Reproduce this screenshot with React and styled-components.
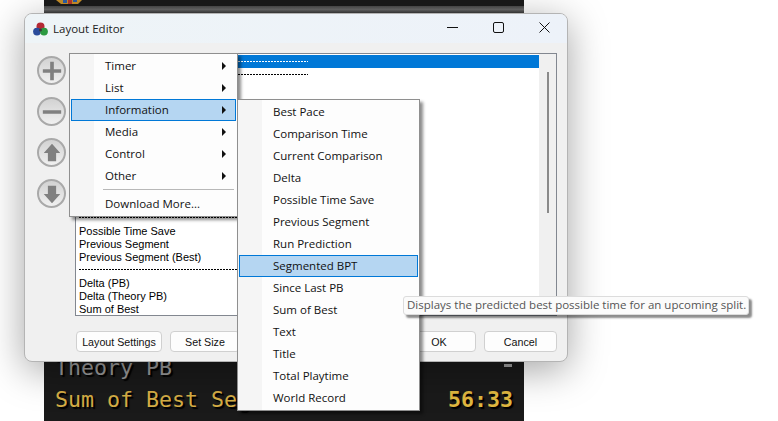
import React from 'react';
import styled, { createGlobalStyle } from 'styled-components';

const GlobalStyle = createGlobalStyle`
  html, body { margin: 0; padding: 0; background: #fff; overflow: hidden; }
  body { font-family: "Open Sans", "Noto Sans", sans-serif; }
`;

const Desktop = styled.div`
  position: relative;
  width: 778px;
  height: 421px;
  overflow: hidden;
  background: #fff;
`;

const Timer = styled.div`
  position: absolute;
  left: 44px;
  top: 0;
  width: 480px;
  height: 421px;
  box-sizing: border-box;
  padding-bottom: 6px;
  background: #1a1a1a;
  font-family: "DejaVu Sans Mono", monospace;
  display: flex;
  flex-direction: column;
  justify-content: flex-end;
`;

const TimerTopStripe = styled.div`
  position: absolute;
  left: 0;
  right: 0;
  top: 6px;
  height: 7px;
  background: linear-gradient(#4a4a4a, #6a6a6a 50%, #3a3a3a);
`;

const TimerIcon = styled.svg`
  position: absolute;
  left: 9px;
  top: 0;
`;

const TimerRow = styled.div`
  display: flex;
  justify-content: space-between;
  align-items: center;
  height: ${(p) => p.$h}px;
  padding: 0 11px;
  font-size: 21.6px;
  color: ${(p) => p.$color};
  text-shadow: 2px 2px 1px #000;
`;

const TimerValue = styled.span`
  font-weight: 700;
  color: #e0b840;
`;

const TimerDash = styled.span`
  width: 8px;
  height: 3px;
  margin: 0 1px 5px 0;
  background: #a0a0a0;
`;

const Window = styled.div`
  position: absolute;
  left: 24px;
  top: 13px;
  width: 544px;
  height: 349px;
  box-sizing: border-box;
  background: #f0f0f0;
  border: 1px solid #b4b4b4;
  border-radius: 8px;
  box-shadow: 0 8px 38px rgba(0, 0, 0, 0.36);
  display: flex;
  flex-direction: column;
  overflow: hidden;
`;

const TitleBar = styled.div`
  flex: 0 0 29px;
  display: flex;
  align-items: center;
  padding-left: 8px;
  background: linear-gradient(90deg, #eef4f7, #edf2f9);
  font-size: 11.5px;
  color: #222;
  gap: 5px;
`;

const WindowControls = styled.div`
  margin-left: auto;
  display: flex;
  height: 100%;
  padding-bottom: 2px;
  box-sizing: border-box;
`;

const ControlButton = styled.div`
  width: 46px;
  display: flex;
  align-items: center;
  justify-content: center;
`;

const Body = styled.div`
  flex: 1;
  display: flex;
  flex-direction: column;
  padding: 10px 10px 0 12px;
`;

const Editor = styled.div`
  display: flex;
  gap: 9px;
  height: 263px;
`;

const ToolColumn = styled.div`
  width: 29px;
  display: flex;
  flex-direction: column;
  gap: 12px;
  padding-top: 3px;
`;

const RoundTool = styled.div`
  width: 29px;
  height: 29px;
  border-radius: 50%;
  box-sizing: border-box;
  border: 2px solid #a9a9a9;
  background: linear-gradient(#d2d2d2, #f0f0f0);
  display: flex;
  align-items: center;
  justify-content: center;
`;

const ListBox = styled.div`
  flex: 1;
  position: relative;
  box-sizing: border-box;
  background: #fff;
  border: 1px solid #828790;
  padding: 1px 0 0 0;
  overflow: hidden;
  font-family: "Liberation Sans", Arial, sans-serif;
  font-size: 11px;
  color: #000;
`;

const ListRow = styled.div`
  height: 13px;
  line-height: 15px;
  width: 464px;
  padding-left: 3px;
  box-sizing: border-box;
  white-space: nowrap;
  overflow: hidden;
  background: ${(p) => (p.$selected ? '#0078d7' : 'transparent')};
  color: ${(p) => (p.$selected ? '#fff' : '#000')};
`;

const Dashes = styled.div`
  width: 229px;
  height: 1px;
  margin-top: 6px;
  background: repeating-linear-gradient(90deg, currentColor 0 2px, transparent 2px 3px);
`;

const ScrollTrack = styled.div`
  position: absolute;
  right: 0;
  top: 0;
  bottom: 0;
  width: 17px;
  background: #f0f0f0;
  display: flex;
  justify-content: center;
  padding-top: 18px;
  box-sizing: border-box;
`;

const ScrollThumb = styled.div`
  width: 2px;
  height: 141px;
  background: #8a8a8a;
`;

const ButtonBar = styled.div`
  display: flex;
  justify-content: space-between;
  margin-top: 15px;
  padding-left: 39px;
`;

const ButtonGroup = styled.div`
  display: flex;
  gap: 8px;
`;

const DialogButton = styled.div`
  width: ${(p) => p.$w}px;
  height: 21px;
  box-sizing: border-box;
  background: #fdfdfd;
  border: 1px solid #d0d0d0;
  border-radius: 4px;
  font-family: "Liberation Sans", Arial, sans-serif;
  font-size: 10.7px;
  line-height: 20px;
  text-align: center;
  color: #111;
`;

const Menu = styled.div`
  position: absolute;
  left: ${(p) => p.$x}px;
  top: ${(p) => p.$y}px;
  width: ${(p) => p.$w}px;
  box-sizing: border-box;
  padding: 1px;
  background: linear-gradient(90deg, #f5f5f5 0 24px, #fdfdfd 24px);
  border: 1px solid #8f8f8f;
  box-shadow: 3px 3px 3px rgba(0, 0, 0, 0.45);
  font-size: 11.5px;
  color: #111;
`;

const MenuItem = styled.div`
  position: relative;
  height: 22px;
  box-sizing: border-box;
  line-height: 19px;
  padding-left: 33px;
  border: 1px solid ${(p) => (p.$active ? '#0078d7' : 'transparent')};
  background: ${(p) => (p.$active ? '#b5d6f2' : 'transparent')};
`;

const Arrow = styled.span`
  position: absolute;
  right: 9px;
  top: 6px;
  width: 0;
  height: 0;
  border-left: 4px solid #111;
  border-top: 4px solid transparent;
  border-bottom: 4px solid transparent;
`;

const MenuDivider = styled.div`
  height: 1px;
  margin: 2px 2px 3px 32px;
  background: #b8b8b8;
`;

const Tooltip = styled.div`
  position: absolute;
  left: 403px;
  top: 296px;
  width: 346px;
  height: 19px;
  box-sizing: border-box;
  background: #fbfbfb;
  border: 1px solid #dcdcdc;
  border-radius: 3px;
  box-shadow: 3px 3px 2px rgba(0, 0, 0, 0.45);
  font-size: 11.5px;
  line-height: 16px;
  padding-left: 3px;
  color: #555;
  white-space: nowrap;
`;

const AppIcon = () => (
  <svg width="15" height="14" viewBox="0 0 15 14">
    <circle cx="7.5" cy="4.4" r="4" fill="#b52a35" />
    <circle cx="4" cy="9.6" r="3.9" fill="#2b4c9b" />
    <circle cx="11" cy="9.6" r="3.9" fill="#2c9a41" />
    <circle cx="7.5" cy="8" r="1.5" fill="#3a3a3a" />
  </svg>
);

const glyphs = {
  plus: 'M10 2h4v8h8v4h-8v8h-4v-8H2v-4h8z',
  minus: 'M2 10h20v4H2z',
  up: 'M12 2l9 10h-4.500v9h-9v-9H3z',
  down: 'M12 22l9-10h-4.500V3h-9v9H3z',
};

const Glyph = ({ name }) => (
  <svg width="22" height="22" viewBox="0 0 24 24">
    <path d={glyphs[name]} fill="#808080" />
  </svg>
);

const topRows = Array.from({ length: 13 }, (_, i) => i);
const bottomRows = [
  'Possible Time Save',
  'Previous Segment',
  'Previous Segment (Best)',
  null,
  'Delta (PB)',
  'Delta (Theory PB)',
  'Sum of Best',
];

const mainItems = ['Timer', 'List', 'Information', 'Media', 'Control', 'Other'];
const infoItems = [
  'Best Pace',
  'Comparison Time',
  'Current Comparison',
  'Delta',
  'Possible Time Save',
  'Previous Segment',
  'Run Prediction',
  'Segmented BPT',
  'Since Last PB',
  'Sum of Best',
  'Text',
  'Title',
  'Total Playtime',
  'World Record',
];

export default function App() {
  return (
    <Desktop>
      <GlobalStyle />
      <Timer>
        <TimerTopStripe />
        <TimerIcon width="32" height="5" viewBox="0 0 32 5">
          <path d="M3 0h26l-4 4H8z" fill="#c8902a" />
          <path d="M10 0h4v3h-4zM20 0h4v2h-4z" fill="#2c5fa8" />
          <path d="M15 0h4v4h-4z" fill="#b8382c" />
        </TimerIcon>
        <TimerRow $color="#9a9a9a" $h={31}>
          <span>Theory PB</span>
          <TimerDash />
        </TimerRow>
        <TimerRow $color="#d6ae45" $h={32}>
          <span>Sum of Best Segments</span>
          <TimerValue>56:33</TimerValue>
        </TimerRow>
      </Timer>

      <Window>
        <TitleBar>
          <AppIcon />
          <span>Layout Editor</span>
          <WindowControls>
            <ControlButton>
              <svg width="11" height="11" viewBox="0 0 11 11"><path d="M0 5.500h11" stroke="#111" /></svg>
            </ControlButton>
            <ControlButton>
              <svg width="11" height="11" viewBox="0 0 11 11"><rect x=".5" y=".5" width="10" height="10" rx="1.500" fill="none" stroke="#111" /></svg>
            </ControlButton>
            <ControlButton>
              <svg width="11" height="11" viewBox="0 0 11 11"><path d="M.5.5l10 10M10.500.5l-10 10" stroke="#111" /></svg>
            </ControlButton>
          </WindowControls>
        </TitleBar>
        <Body>
          <Editor>
            <ToolColumn>
              <RoundTool><Glyph name="plus" /></RoundTool>
              <RoundTool><Glyph name="minus" /></RoundTool>
              <RoundTool><Glyph name="up" /></RoundTool>
              <RoundTool><Glyph name="down" /></RoundTool>
            </ToolColumn>
            <ListBox>
              {topRows.map((i) => (
                <ListRow key={i} $selected={i === 0}>
                  {i < 2 || i === 12 ? <Dashes /> : null}
                </ListRow>
              ))}
              {bottomRows.map((text, i) => (
                <ListRow key={i}>{text || <Dashes />}</ListRow>
              ))}
              <ScrollTrack><ScrollThumb /></ScrollTrack>
            </ListBox>
          </Editor>
          <ButtonBar>
            <ButtonGroup>
              <DialogButton $w={86}>Layout Settings</DialogButton>
              <DialogButton $w={70}>Set Size</DialogButton>
            </ButtonGroup>
            <ButtonGroup>
              <DialogButton $w={74}>OK</DialogButton>
              <DialogButton $w={73}>Cancel</DialogButton>
            </ButtonGroup>
          </ButtonBar>
        </Body>
      </Window>

      <Menu $x={69} $y={53} $w={169}>
        {mainItems.map((item) => (
          <MenuItem key={item} $active={item === 'Information'}>
            {item}
            <Arrow />
          </MenuItem>
        ))}
        <MenuDivider />
        <MenuItem>Download More...</MenuItem>
      </Menu>

      <Menu $x={237} $y={99} $w={183}>
        {infoItems.map((item) => (
          <MenuItem key={item} $active={item === 'Segmented BPT'}>
            {item}
          </MenuItem>
        ))}
      </Menu>

      <Tooltip>Displays the predicted best possible time for an upcoming split.</Tooltip>
    </Desktop>
  );
}
